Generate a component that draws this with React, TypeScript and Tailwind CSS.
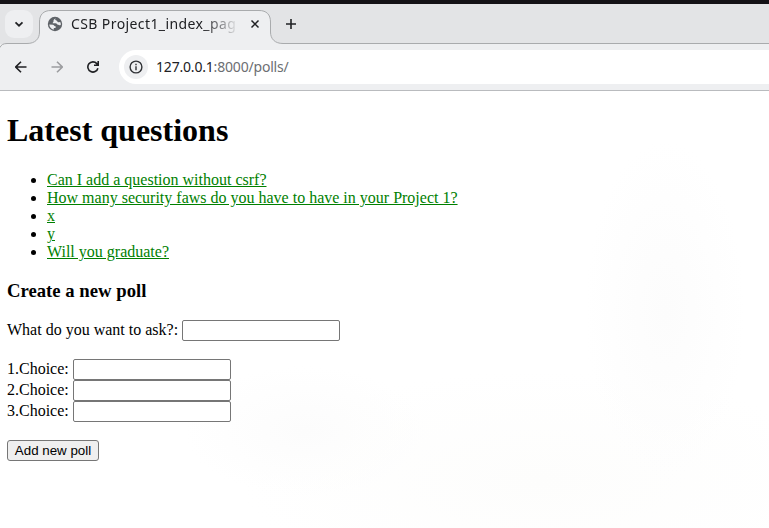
const questions = [
  "Can I add a question without csrf?",
  "How many security faws do you have to have in your Project 1?",
  "x",
  "y",
  "Will you graduate?",
];

const ui = "font-['Noto_Sans','Open_Sans',sans-serif]";

function TabStrip() {
  return (
    <div className="relative h-10 shrink-0 bg-[#e3e4e6]">
      <svg className="absolute left-0 top-0" width="769" height="44" viewBox="0 4 769 44" fill="none">
        <path d="M0 48C1 45 3 43.5 7 43.5H27C35 43.5 39.500 39 39.500 32V22C39.500 14.500 43.500 10.500 51 10.500H259C266.500 10.500 270.500 14.500 270.500 22V32C270.500 39 275 43.500 283 43.500H769V48Z" fill="#eeeff1" />
        <path d="M0 47.500C1 45 3 43.500 7 43.500H27C35 43.500 39.500 39 39.500 32V22C39.500 14.500 43.500 10.500 51 10.500H259C266.500 10.500 270.500 14.500 270.500 22V32C270.500 39 275 43.500 283 43.500H769" stroke="#a9abad" />
      </svg>
      <div className="relative flex h-10 items-center">
        <button className="ml-[5px] flex h-7 w-7 items-center justify-center rounded-[9px] bg-[#eeeff1]" aria-label="Search tabs">
          <svg width="10" height="10" viewBox="0 0 10 10" fill="none" stroke="#202124" strokeWidth="1.7">
            <path d="M1.500 3.300L5 6.700L8.500 3.300" />
          </svg>
        </button>
        <svg className="ml-[14px] shrink-0" width="16" height="16" viewBox="0 0 16 16">
          <circle cx="8" cy="8" r="7.200" fill="#5f6368" />
          <path d="M8.700 2.200C7.900 3 8 4.100 9 4.300C10.400 4.500 10.200 6.200 11.400 6.300C12.300 6.300 12.600 5.800 13.300 6.200C13.900 7.100 13.900 8.100 13.700 9C12.500 9.400 10.900 9.200 10.300 8.300C9.700 7.500 9 7.300 7.700 7.300H5.700C5.500 6.200 6.700 6.200 6.500 5.200C6.300 4.300 7 3 8.700 2.200Z" fill="#eeeff1" />
          <path d="M2.300 8.500L5.900 8.700C7 9 7.100 10.100 8.200 10.300C9.100 10.600 9 11.700 8.200 11.900L6.800 12.100V13.700C4.200 13.100 2.300 11 2.300 8.500Z" fill="#eeeff1" />
        </svg>
        <div className={`${ui} ml-2 w-[168px] overflow-hidden whitespace-nowrap text-[14px] leading-5 tracking-[0.400px] text-[#202124] [mask-image:linear-gradient(to_right,black_132px,transparent_168px)]`}>
          CSB Project1_index_pag
        </div>
        <svg className="ml-[11px]" width="10" height="10" viewBox="0 0 10 10" stroke="#202124" strokeWidth="1.500">
          <path d="M1.500 1.500L8.500 8.500M8.500 1.500L1.500 8.500" />
        </svg>
        <svg className="ml-[25px]" width="12" height="12" viewBox="0 0 12 12" stroke="#202124" strokeWidth="1.600">
          <path d="M6 1V11M1 6H11" />
        </svg>
      </div>
    </div>
  );
}

function Arrow({ forward = false }: { forward?: boolean }) {
  return (
    <svg width="12" height="12" viewBox="0 0 12 12" fill="none" stroke={forward ? "#9c9da0" : "#202124"} strokeWidth="1.600">
      {forward ? <path d="M.5 6H11M6 .7L11.300 6L6 11.300" /> : <path d="M11.500 6H1M6 .7L.7 6L6 11.300" />}
    </svg>
  );
}

function Toolbar() {
  return (
    <div className="flex h-[47px] shrink-0 items-center border-b border-[#b9bbbe] pl-[15px]">
      <Arrow />
      <div className="ml-6"><Arrow forward /></div>
      <svg className="ml-6" width="12" height="12" viewBox="0 0 12 12" fill="none" stroke="#202124" strokeWidth="1.600">
        <path d="M10.900 7.200A5.100 5.100 0 1 1 9.800 2.600L11.200 4M11.200 .1V4.300H7" />
      </svg>
      <div className="ml-5 flex h-[34px] flex-1 items-center rounded-l-full bg-white pl-[5px]">
        <div className="flex h-6 w-6 items-center justify-center rounded-full bg-[#eeeff1]">
          <svg width="14" height="14" viewBox="0 0 14 14" fill="none" stroke="#303236" strokeWidth="1.400">
            <circle cx="7" cy="7" r="5.900" />
            <path d="M7 6.300V10.200M7 3.700V5.200" />
          </svg>
        </div>
        <div className={`${ui} ml-2 text-[14px] leading-5 tracking-[-0.190px] text-[#202124]`}>
          127.0.0.1<span className="text-[#6c6e72]">:8000/polls/</span>
        </div>
      </div>
    </div>
  );
}

function TextField({ label }: { label: string }) {
  return (
    <label className="flex h-[21px] items-start gap-1">
      <span className="pt-px leading-[18px]">{label}</span>
      <input className="h-[21px] w-[158px] rounded-[2px] border border-[#767676] bg-white px-0.5" />
    </label>
  );
}

export default function App() {
  return (
    <div className="flex h-[528px] w-[769px] flex-col overflow-hidden bg-[#eeeff1]">
      <div className="h-1 shrink-0 bg-[#141216]" />
      <TabStrip />
      <Toolbar />
      <main className="flex-1 bg-white bg-[radial-gradient(ellipse_80px_170px_at_665px_220px,#fcfcfc,transparent),radial-gradient(ellipse_300px_110px_at_540px_390px,#fdfdfc,transparent),radial-gradient(ellipse_120px_65px_at_305px_340px,#fcfcfc,transparent)] pl-[7px] font-['Liberation_Serif','Times_New_Roman',serif] text-base leading-[18px] text-black">
        <h1 className="pt-[21px] text-[32px] font-bold leading-[37px]">Latest questions</h1>
        <ul className="mt-[22px] list-disc pl-10">
          {questions.map((question) => (
            <li key={question}>
              <a href="#" className="text-[#008000] underline">{question}</a>
            </li>
          ))}
        </ul>
        <h3 className="mt-[19px] text-[18.72px] font-bold leading-[21px]">Create a new poll</h3>
        <form className="mt-[19px]">
          <TextField label="What do you want to ask?:" />
          <div className="mt-[18px]">
            <TextField label="1.Choice:" />
            <TextField label="2.Choice:" />
            <TextField label="3.Choice:" />
          </div>
          <button type="button" className="mt-[18px] h-[21px] w-[92px] whitespace-nowrap rounded-[3px] border border-[#767676] bg-[#efefef] font-['Liberation_Sans',Arial,sans-serif] text-[13.333px] leading-[15px]">
            Add new poll
          </button>
        </form>
      </main>
    </div>
  );
}
